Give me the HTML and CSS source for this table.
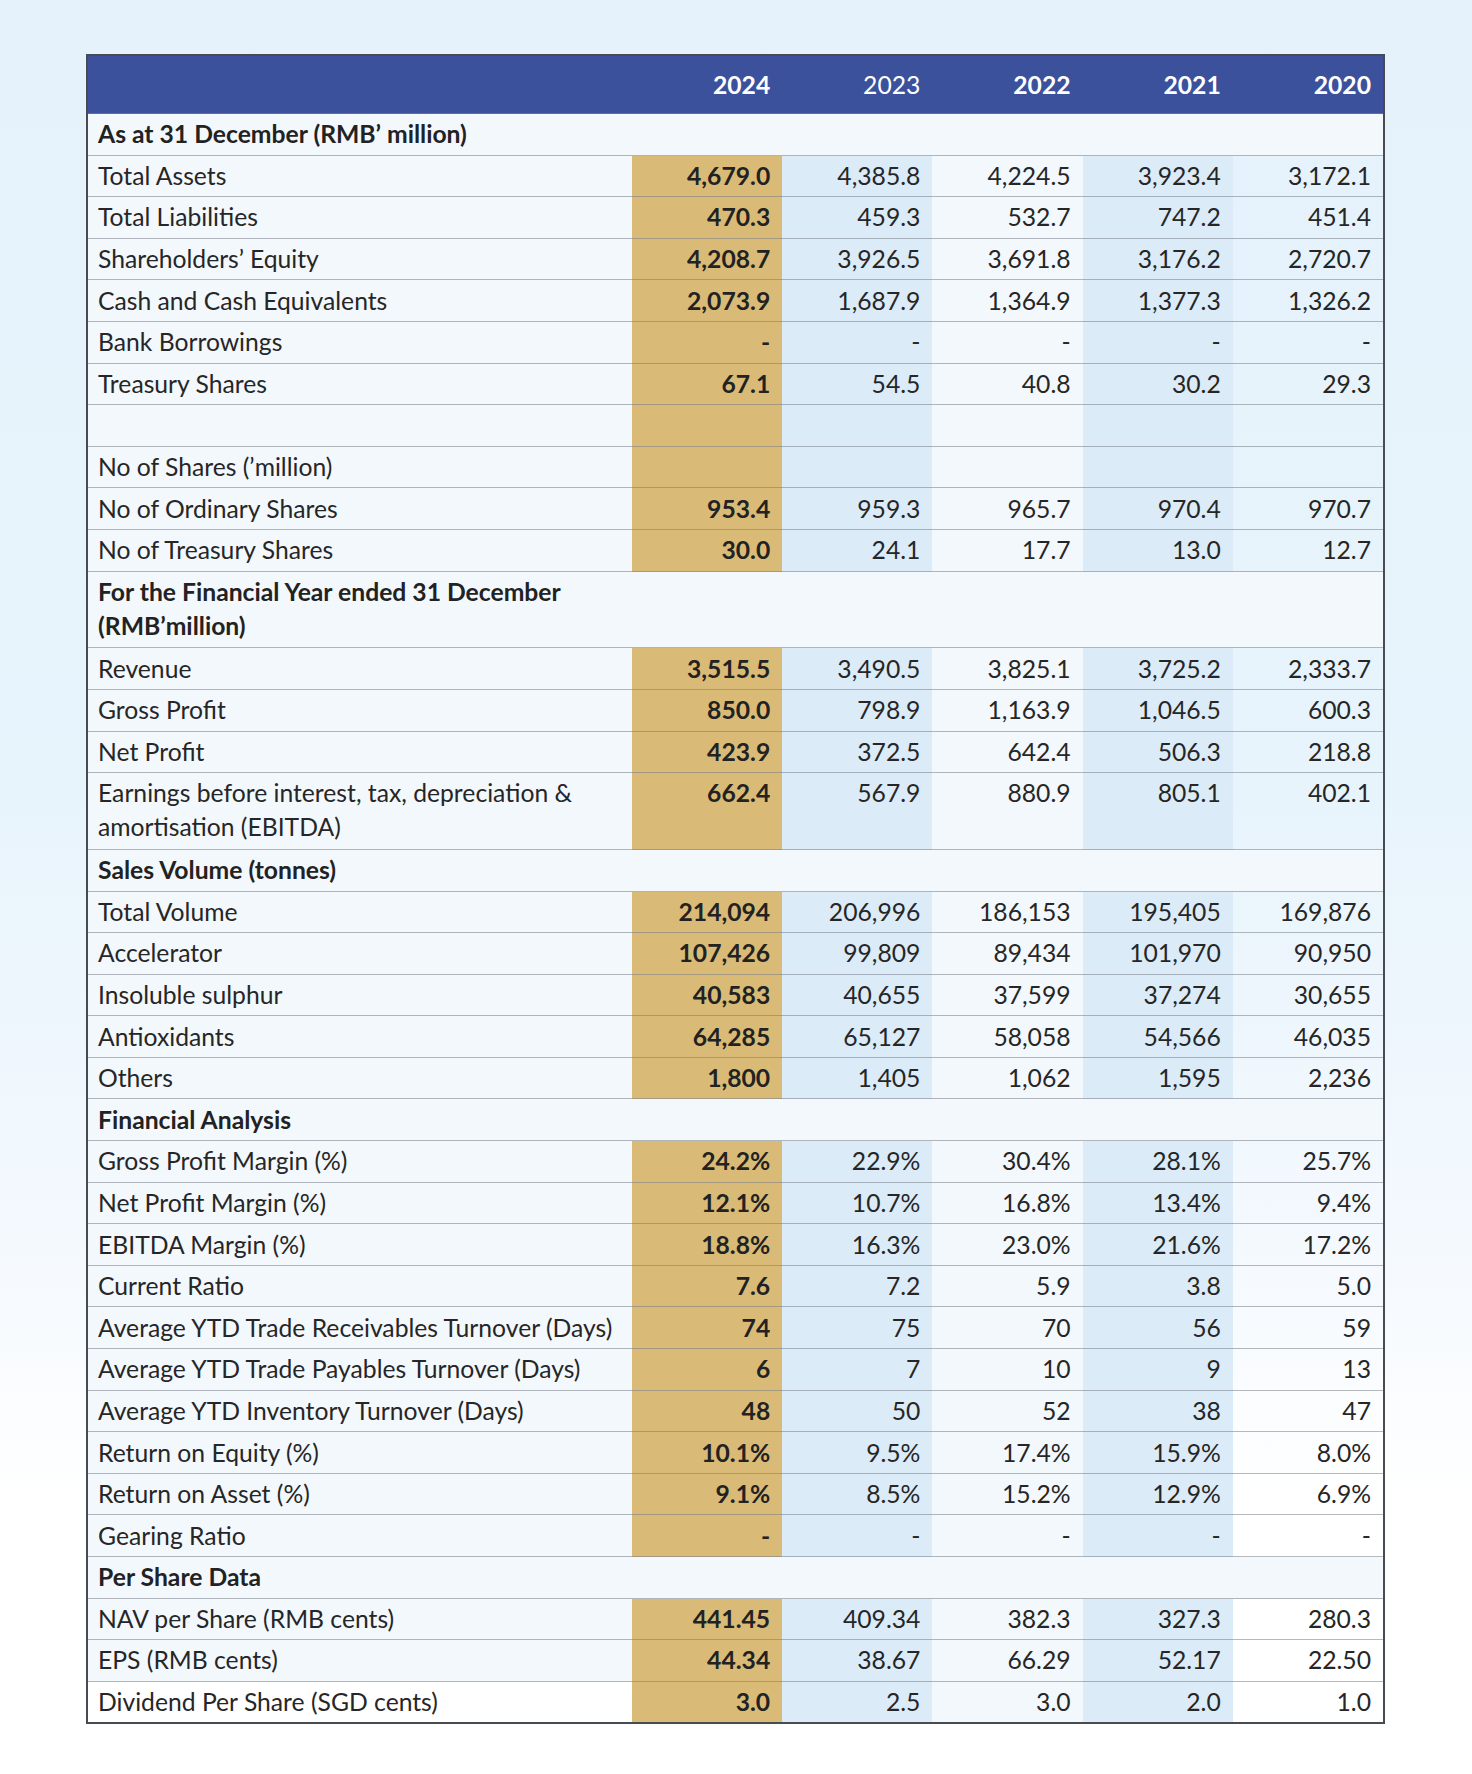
FILE: index.html
```html
<!DOCTYPE html>
<html lang="en">
<head>
<meta charset="utf-8">
<title>Financial Highlights</title>
<link rel="stylesheet" href="styles.css">
</head>
<body>
<main class="page">
<table class="fin">
  <colgroup>
    <col class="c-label">
    <col class="c-year">
    <col class="c-year">
    <col class="c-year">
    <col class="c-year">
    <col class="c-year">
  </colgroup>
  <thead>
    <tr>
      <th></th>
      <th>2024</th>
      <th class="reg">2023</th>
      <th>2022</th>
      <th>2021</th>
      <th>2020</th>
    </tr>
  </thead>
  <tbody>
    <tr class="sec"><td colspan="6">As at 31 December (RMB’ million)</td></tr>
    <tr><td>Total Assets</td><td>4,679.0</td><td>4,385.8</td><td>4,224.5</td><td>3,923.4</td><td>3,172.1</td></tr>
    <tr><td>Total Liabilities</td><td>470.3</td><td>459.3</td><td>532.7</td><td>747.2</td><td>451.4</td></tr>
    <tr><td>Shareholders’ Equity</td><td>4,208.7</td><td>3,926.5</td><td>3,691.8</td><td>3,176.2</td><td>2,720.7</td></tr>
    <tr><td>Cash and Cash Equivalents</td><td>2,073.9</td><td>1,687.9</td><td>1,364.9</td><td>1,377.3</td><td>1,326.2</td></tr>
    <tr><td>Bank Borrowings</td><td>-</td><td>-</td><td>-</td><td>-</td><td>-</td></tr>
    <tr><td>Treasury Shares</td><td>67.1</td><td>54.5</td><td>40.8</td><td>30.2</td><td>29.3</td></tr>
    <tr><td>&nbsp;</td><td></td><td></td><td></td><td></td><td></td></tr>
    <tr><td>No of Shares (’million)</td><td></td><td></td><td></td><td></td><td></td></tr>
    <tr><td>No of Ordinary Shares</td><td>953.4</td><td>959.3</td><td>965.7</td><td>970.4</td><td>970.7</td></tr>
    <tr><td>No of Treasury Shares</td><td>30.0</td><td>24.1</td><td>17.7</td><td>13.0</td><td>12.7</td></tr>
    <tr class="sec tall"><td colspan="6">For the Financial Year ended 31 December<br>(RMB’million)</td></tr>
    <tr><td>Revenue</td><td>3,515.5</td><td>3,490.5</td><td>3,825.1</td><td>3,725.2</td><td>2,333.7</td></tr>
    <tr><td>Gross Profit</td><td>850.0</td><td>798.9</td><td>1,163.9</td><td>1,046.5</td><td>600.3</td></tr>
    <tr><td>Net Profit</td><td>423.9</td><td>372.5</td><td>642.4</td><td>506.3</td><td>218.8</td></tr>
    <tr class="tall"><td>Earnings before interest, tax, depreciation &amp;<br>amortisation (EBITDA)</td><td>662.4</td><td>567.9</td><td>880.9</td><td>805.1</td><td>402.1</td></tr>
    <tr class="sec"><td colspan="6">Sales Volume (tonnes)</td></tr>
    <tr><td>Total Volume</td><td>214,094</td><td>206,996</td><td>186,153</td><td>195,405</td><td>169,876</td></tr>
    <tr><td>Accelerator</td><td>107,426</td><td>99,809</td><td>89,434</td><td>101,970</td><td>90,950</td></tr>
    <tr><td>Insoluble sulphur</td><td>40,583</td><td>40,655</td><td>37,599</td><td>37,274</td><td>30,655</td></tr>
    <tr><td>Antioxidants</td><td>64,285</td><td>65,127</td><td>58,058</td><td>54,566</td><td>46,035</td></tr>
    <tr><td>Others</td><td>1,800</td><td>1,405</td><td>1,062</td><td>1,595</td><td>2,236</td></tr>
    <tr class="sec"><td colspan="6">Financial Analysis</td></tr>
    <tr><td>Gross Profit Margin (%)</td><td>24.2%</td><td>22.9%</td><td>30.4%</td><td>28.1%</td><td>25.7%</td></tr>
    <tr><td>Net Profit Margin (%)</td><td>12.1%</td><td>10.7%</td><td>16.8%</td><td>13.4%</td><td>9.4%</td></tr>
    <tr><td>EBITDA Margin (%)</td><td>18.8%</td><td>16.3%</td><td>23.0%</td><td>21.6%</td><td>17.2%</td></tr>
    <tr><td>Current Ratio</td><td>7.6</td><td>7.2</td><td>5.9</td><td>3.8</td><td>5.0</td></tr>
    <tr><td>Average YTD Trade Receivables Turnover (Days)</td><td>74</td><td>75</td><td>70</td><td>56</td><td>59</td></tr>
    <tr><td>Average YTD Trade Payables Turnover (Days)</td><td>6</td><td>7</td><td>10</td><td>9</td><td>13</td></tr>
    <tr><td>Average YTD Inventory Turnover (Days)</td><td>48</td><td>50</td><td>52</td><td>38</td><td>47</td></tr>
    <tr><td>Return on Equity (%)</td><td>10.1%</td><td>9.5%</td><td>17.4%</td><td>15.9%</td><td>8.0%</td></tr>
    <tr><td>Return on Asset (%)</td><td>9.1%</td><td>8.5%</td><td>15.2%</td><td>12.9%</td><td>6.9%</td></tr>
    <tr><td>Gearing Ratio</td><td>-</td><td>-</td><td>-</td><td>-</td><td>-</td></tr>
    <tr class="sec"><td colspan="6">Per Share Data</td></tr>
    <tr><td>NAV per Share (RMB cents)</td><td>441.45</td><td>409.34</td><td>382.3</td><td>327.3</td><td>280.3</td></tr>
    <tr><td>EPS (RMB cents)</td><td>44.34</td><td>38.67</td><td>66.29</td><td>52.17</td><td>22.50</td></tr>
    <tr class="last"><td>Dividend Per Share (SGD cents)</td><td>3.0</td><td>2.5</td><td>3.0</td><td>2.0</td><td>1.0</td></tr>
  </tbody>
</table>
</main>
</body>
</html>
```

FILE: styles.css
```css
html, body {
  margin: 0;
  padding: 0;
}

body {
  min-height: 1774px;
  background: linear-gradient(180deg, #e5f2fb 0%, #e8f4fc 45%, #f4f9fe 70%, #ffffff 85%, #ffffff 100%);
  font-family: Lato, "Open Sans", "Noto Sans", sans-serif;
  color: #262626;
}

.page {
  padding: 54px 0 0 86px;
}

.fin {
  width: 1299px;
  border: 2px solid #474b52;
  border-collapse: separate;
  border-spacing: 0;
  table-layout: fixed;
  font-size: 24.7px;
}

.c-label { width: 544px; }
.c-year { width: 150.2px; }

.fin th {
  background: #3c519c;
  color: #ffffff;
  font-weight: 700;
  text-align: right;
  padding: 11.5px 12px 11.5px 10px;
  line-height: 34px;
  height: 34px;
  border-bottom: 1px solid #5a6db0;
}

.fin th.reg {
  font-weight: 400;
}

.fin td {
  padding: 3.3px 12px 3.3px 10px;
  line-height: 34px;
  text-align: right;
  vertical-align: top;
  border-bottom: 1px solid rgba(120, 126, 136, 0.55);
  background: #f3f8fd;
  white-space: nowrap;
}

.fin td:first-child {
  text-align: left;
}

.fin tr td:nth-child(2) {
  background: #d9bb77;
  font-weight: 700;
  color: #222222;
}

.fin tr td:nth-child(3),
.fin tr td:nth-child(5) {
  background: #dbebf8;
}

.fin tr td:nth-child(6) {
  background: transparent;
}

.fin tr.sec td {
  background: #f3f8fd;
  font-weight: 700;
  text-align: left;
  color: #222222;
}

.fin tr.tall td {
  padding-bottom: 4.5px;
}

.fin tr.last td {
  border-bottom: none;
}

.fin tr.last td:first-child {
  background: #ffffff;
}
```
